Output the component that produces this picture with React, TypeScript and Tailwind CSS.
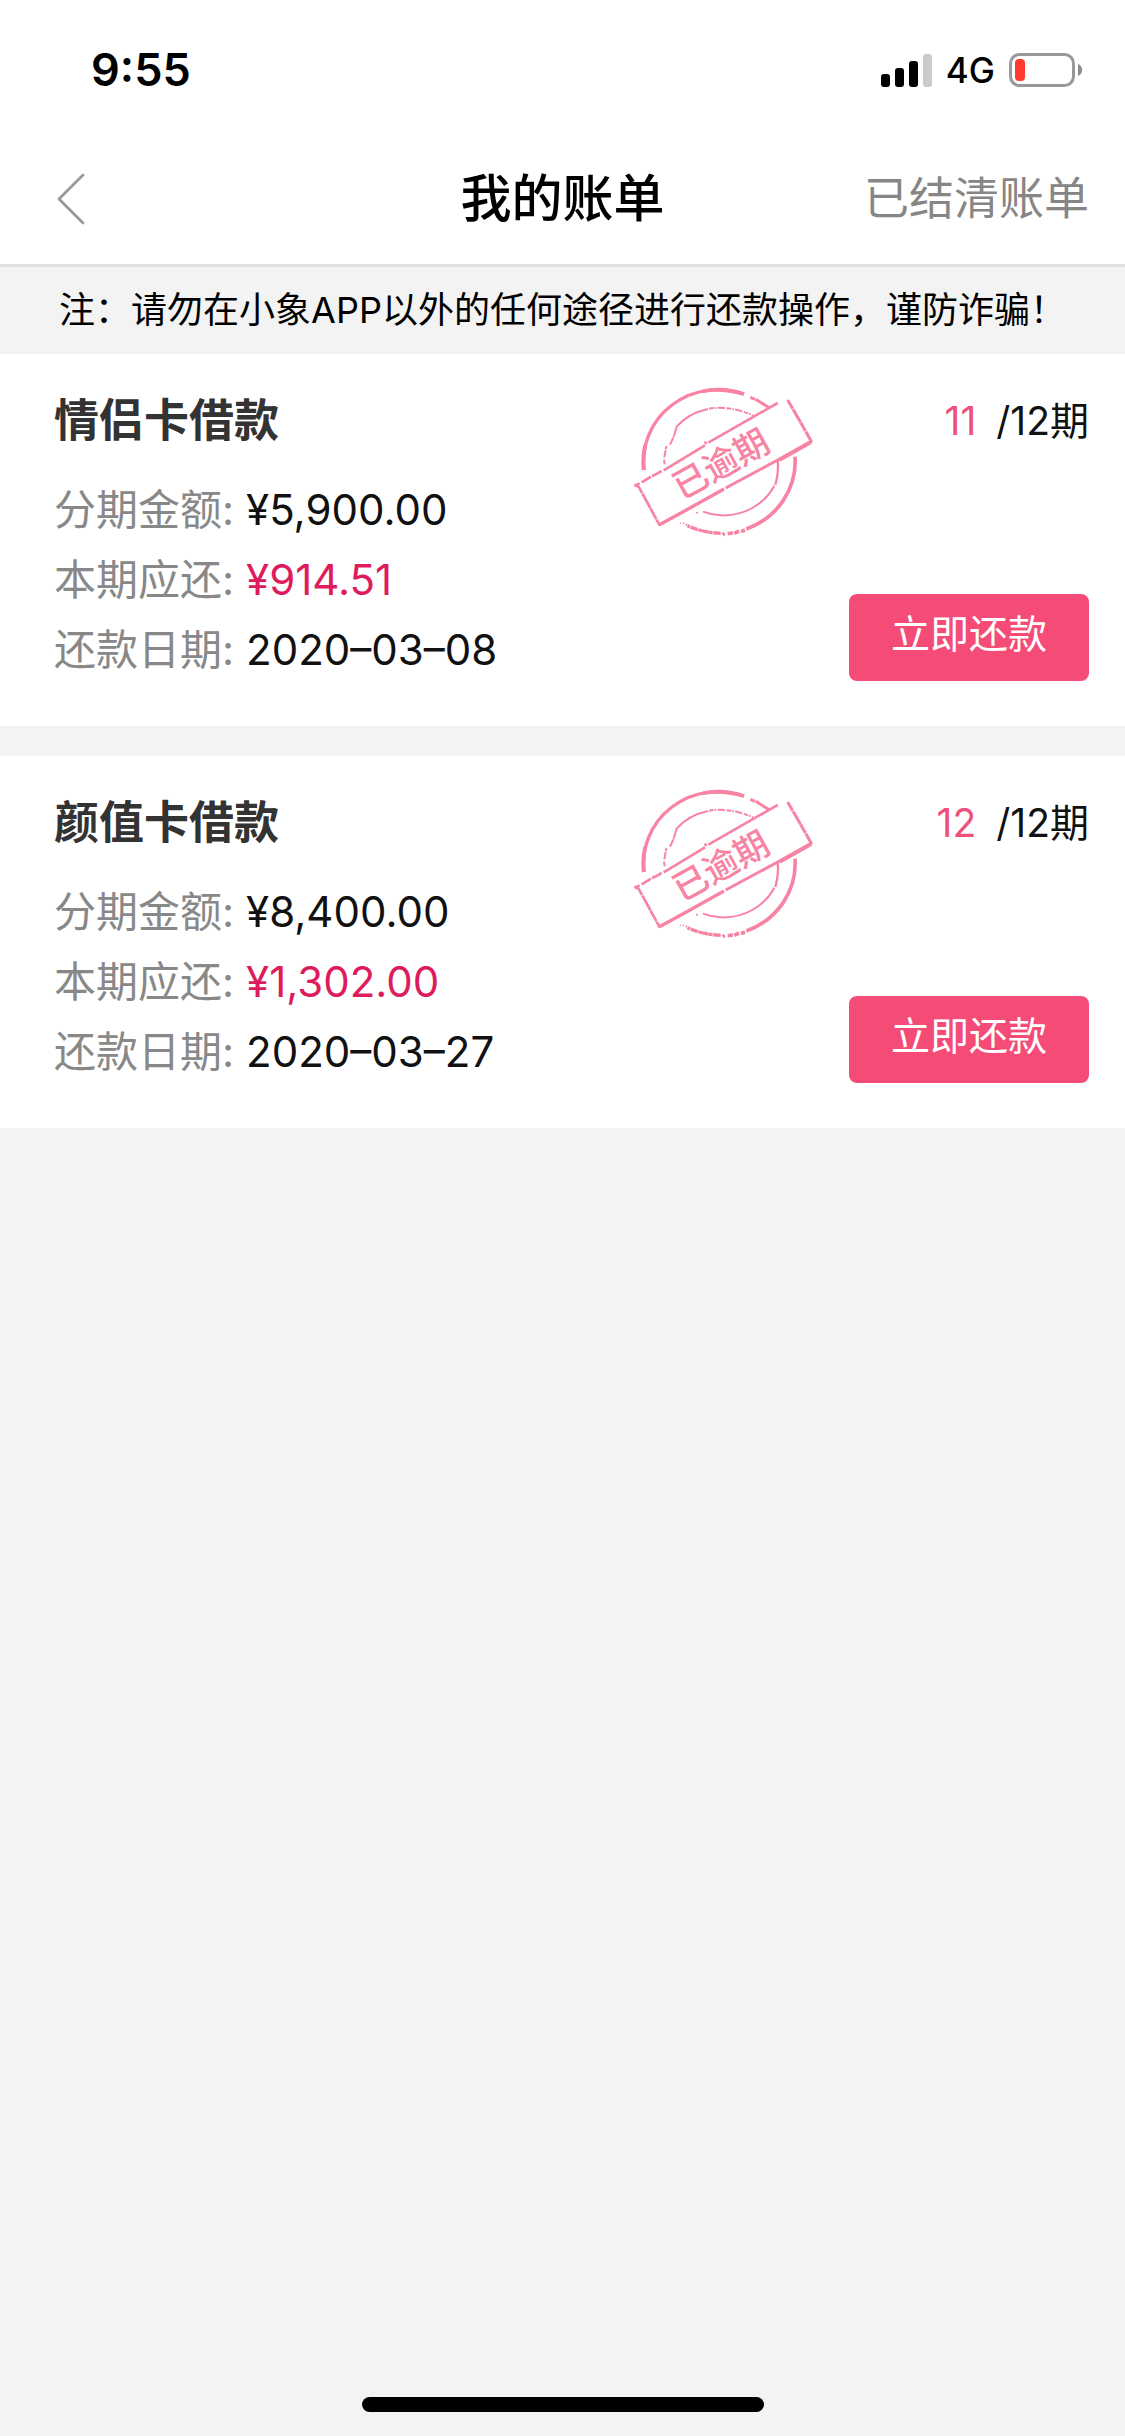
type Bill = {
    name: string;
    amount: string;
    due: string;
    date: string;
    current: number;
    total: number;
};

const bills: Bill[] = [
    { name: '情侣卡借款', amount: '¥5,900.00', due: '¥914.51', date: '2020–03–08', current: 11, total: 12 },
    { name: '颜值卡借款', amount: '¥8,400.00', due: '¥1,302.00', date: '2020–03–27', current: 12, total: 12 },
];

function StatusBar() {
    return (
        <div className="flex items-center justify-between h-[132px] pt-2 pl-[91px] pr-[42px]">
            <span className="text-[45px] leading-[54px] font-semibold">9:55</span>
            <div className="flex items-center gap-3.5">
                <svg width="51" height="33" viewBox="0 0 51 33" aria-hidden="true">
                    <rect x="0" y="20" width="9" height="13" rx="3" />
                    <rect x="14" y="14" width="9" height="19" rx="3" />
                    <rect x="28" y="7" width="9" height="26" rx="3" />
                    <rect x="42" y="0" width="9" height="33" rx="3" fill="#cbcbcb" />
                </svg>
                <span className="text-[35px] leading-[42px] font-medium">4G</span>
                <svg width="74" height="34" viewBox="0 0 74 34" aria-hidden="true">
                    <rect x="1.5" y="1.5" width="63" height="31" rx="9" fill="none" stroke="#999" strokeWidth="3" />
                    <rect x="6" y="6" width="10" height="22" rx="4" fill="#ff3b30" />
                    <path d="M69 11c5.500 2 5.500 10 0 12z" fill="#8c8c8c" />
                </svg>
            </div>
        </div>
    );
}

function NavBar() {
    return (
        <header className="grid grid-cols-[1fr_auto_1fr] items-center h-[135px] pt-0.5 px-9 border-b-[3px] border-[#e2e2e2]">
            <button type="button" aria-label="返回" className="justify-self-start pl-5">
                <svg width="30" height="52" viewBox="0 0 30 52" fill="none" stroke="#999" strokeWidth="2.800" strokeLinecap="round" strokeLinejoin="round">
                    <path d="M27 2 3 26l24 24" />
                </svg>
            </button>
            <h1 className="text-[51px] leading-[72px] font-medium">我的账单</h1>
            <a href="#settled" className="justify-self-end text-[45px] leading-[66px] text-[#868686]">已结清账单</a>
        </header>
    );
}

function OverdueStamp() {
    return (
        <svg viewBox="40 48 540 456" className="w-[180px] h-[152px] shrink-0" fill="none" stroke="#f883a3" strokeLinecap="butt">
            {/* outer ring, worn through at the top right and bottom */}
            <path d="M73 300A224 216 0 0 1 373 72" strokeWidth="10" />
            <path d="M72 300Q69 255 77 225" strokeWidth="12" />
            <path d="M250 64Q300 52 373 72" strokeWidth="11" />
            <path d="M392 82l14 6M408 88l42 26" strokeWidth="9" />
            <path d="M526 260A224 216 0 0 1 380 477" strokeWidth="11" />
            <path d="M376 480l-12 5M358 483l-14 7M340 489l-16 2M315 490l-6 4" strokeWidth="11" />
            <path d="M303 490Q250 488 203 467" strokeWidth="10" strokeDasharray="22 2 13 1 30 2" />
            <path d="M202 461l-4 5M193 458l-3 3M184 459l-3 2" strokeWidth="4" />
            {/* inner ring */}
            <path d="M135 283l-2-14M134 262l4-22M138 238l3-10M151 224q6-12 10-22" strokeWidth="6" />
            <path d="M162 200l9-30Q205 130 265 117" strokeWidth="6" />
            <path d="M268 116Q330 106 400 136" strokeWidth="6" strokeDasharray="14 3 5 4 22 5" />
            <path d="M474 270Q478 305 467 345" strokeWidth="7" />
            <path d="M464 347A170 161 0 0 1 304 436Q275 435 250 425" strokeWidth="6" />
            <circle cx="232" cy="428" r="3" fill="#f883a3" stroke="none" />
            {/* banner */}
            <path d="M48 347 120 464 574 215 505 92z" fill="#fff" stroke="none" />
            <path d="M46 347l14-7M66 337l28-17M97 318l12-5M108 313l18-10M132 301 256 226M254 217l8 3M266 218 474 99" strokeWidth="8" />
            <path d="M44 344 57 350 120 466" strokeWidth="8" strokeDasharray="36 2 50 1" />
            <path d="M504 90 540 152 576 216" strokeWidth="9" strokeDasharray="30 2 44 1" />
            <path d="M118 465 200 420 313 357" strokeWidth="10" />
            <path d="M318 354 480 267 576 214" strokeWidth="9" />
            <path d="M480 269 574 216" strokeWidth="12" />
            <text
                transform="translate(303 280) rotate(-29)"
                textAnchor="middle"
                dominantBaseline="central"
                fontSize="104"
                fontWeight="500"
                fill="#f883a3"
                stroke="none"
            >
                已逾期
            </text>
        </svg>
    );
}

function BillCard({ bill }: { bill: Bill }) {
    const rows = [
        { label: '分期金额:', value: bill.amount, color: 'text-[#111]' },
        { label: '本期应还:', value: bill.due, color: 'text-[#de1b5c]' },
        { label: '还款日期:', value: bill.date, color: 'text-[#111]' },
    ];

    return (
        <section className="flex gap-9 bg-white pl-[54px] pr-9 pt-8 pb-[41px]">
            <div className="flex-1">
                <h2 className="text-[45px] leading-[70px] font-bold text-[#333]">{bill.name}</h2>
                <dl className="mt-[19px]">
                    {rows.map((row) => (
                        <div key={row.label} className="flex gap-3 text-[42px] leading-[70px]">
                            <dt className="text-[#888]">{row.label}</dt>
                            <dd className={row.color}>{row.value}</dd>
                        </div>
                    ))}
                </dl>
            </div>
            <OverdueStamp />
            <div className="flex flex-col justify-between w-60 pb-1">
                <p className="text-right text-[39px] leading-[70px] text-[#111]">
                    <span className="mr-5 text-[#f0507c]">{bill.current}</span>
                    /{bill.total}期
                </p>
                <button type="button" className="h-[87px] pb-1.5 rounded-lg bg-[#f54b77] text-[39px] text-white">
                    立即还款
                </button>
            </div>
        </section>
    );
}

export default function App() {
    return (
        <div className="flex flex-col min-h-screen bg-[#f3f3f3] text-black font-['Inter','Noto_Sans_CJK_SC',sans-serif]">
            <div className="bg-white">
                <StatusBar />
                <NavBar />
            </div>
            <p className="py-[15px] text-center text-[36px] leading-[57px]">
                注：请勿在小象APP以外的任何途径进行还款操作，谨防诈骗！
            </p>
            <main className="flex flex-col flex-1 gap-[30px]">
                {bills.map((bill) => (
                    <BillCard key={bill.name} bill={bill} />
                ))}
            </main>
            <div className="flex justify-center pb-6">
                <div className="w-[402px] h-[15px] rounded-full bg-black" />
            </div>
        </div>
    );
}
